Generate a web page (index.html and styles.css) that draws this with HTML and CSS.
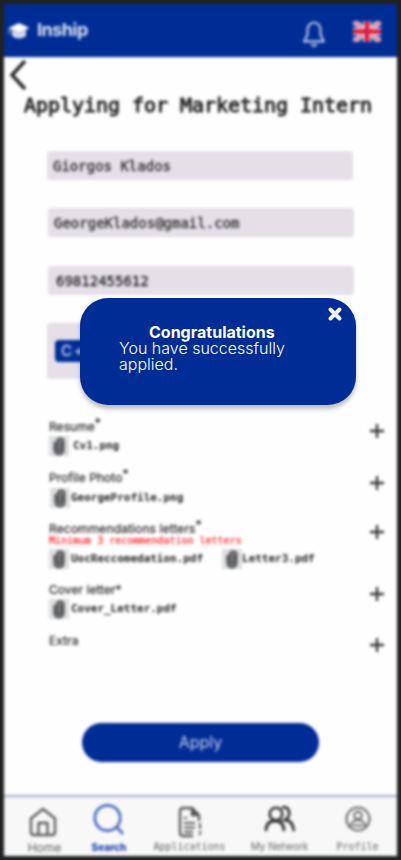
FILE: index.html
```html
<!DOCTYPE html>
<html lang="en">
<head>
<meta charset="utf-8">
<title>Inship</title>
<link rel="stylesheet" href="styles.css">
</head>
<body>
<svg class="defs" width="0" height="0">
  <symbol id="clip" viewBox="0 0 20 20"><rect width="20" height="20" fill="#dedede"/><path d="M5.500 6v8a4.500 4.500 0 0 0 9 0V5a3.300 3.300 0 0 0-6.500 0V13a2 2 0 0 0 4 0V6" fill="#85878a" stroke="#56585b" stroke-width="2.200"/></symbol>
  <symbol id="plus" viewBox="0 0 16 16"><path d="M8 1v14M1 8h14" stroke="#333" stroke-width="2.300"/></symbol>
</svg>
<div class="phone">
  <header class="top">
    <svg class="cap" width="22" height="18" viewBox="0 0 22 18"><path d="M11 1 0.500 6 11 11 21.500 6z" fill="#fff"/><path d="M4 8v6q7 5 14 0V8l-7 3.300z" fill="#d5dcf0"/><path d="M1.500 6v6" stroke="#d5dcf0"/></svg>
    <span class="brand">Inship</span>
    <svg class="bell" width="26" height="28" viewBox="0 0 26 28"><path d="M2 21.300h22M4.500 21V18l2-3V10a6.500 7.500 0 0 1 13 0v5l2 3v3M10.500 24q2.500 4 5 0" fill="none" stroke="#b9c7ea" stroke-width="2.200"/></svg>
    <svg class="flag" width="28" height="21" viewBox="0 0 28 21"><rect width="28" height="21" fill="#284a9e"/><path d="M0 0 28 21M28 0 0 21" stroke="#fff" stroke-width="4.600"/><path d="M0 0 28 21M28 0 0 21" stroke="#dc3550" stroke-width="1.500"/><path d="M14 0v21M0 10.500h28" stroke="#f5dfe7" stroke-width="7"/><path d="M14 0v21M0 10.500h28" stroke="#d9183c" stroke-width="4.600"/></svg>
  </header>
  <main class="content">
    <svg class="back" width="18" height="32" viewBox="0 0 18 32"><path d="M16 2 3 16 16 30" fill="none" stroke="#222" stroke-width="3.400"/></svg>
    <h1 class="title">Applying for Marketing Intern</h1>
    <div class="fields">
      <div class="field">Giorgos Klados</div>
      <div class="field second">GeorgeKlados@gmail.com</div>
      <div class="field third">69812455612</div>
      <div class="field skills"><span class="tag">C++</span></div>
    </div>
    <div class="docs">
      <section class="doc"><div class="info"><p class="label">Resume<sup>*</sup></p><div class="files"><span class="file resume"><svg><use href="#clip"/></svg>Cv1.png</span></div></div><svg class="plus"><use href="#plus"/></svg></section>
      <section class="doc photo"><div class="info"><p class="label">Profile Photo<sup>*</sup></p><div class="files"><span class="file"><svg><use href="#clip"/></svg>GeorgeProfile.png</span></div></div><svg class="plus"><use href="#plus"/></svg></section>
      <section class="doc letters"><div class="info"><p class="label">Recommendations letters<sup>*</sup></p><p class="warn">Minimum 3 recommendation letters</p><div class="files"><span class="file"><svg><use href="#clip"/></svg>UocReccomedation.pdf</span><span class="file letter"><svg><use href="#clip"/></svg>Letter3.pdf</span></div></div><svg class="plus"><use href="#plus"/></svg></section>
      <section class="doc"><div class="info"><p class="label">Cover letter*</p><div class="files"><span class="file cover"><svg><use href="#clip"/></svg>Cover_Letter.pdf</span></div></div><svg class="plus"><use href="#plus"/></svg></section>
      <section class="doc"><div class="info"><p class="label">Extra</p></div><svg class="plus"><use href="#plus"/></svg></section>
    </div>
    <button class="apply">Apply</button>
  </main>
  <nav class="nav">
    <a class="item home"><svg width="30" height="32" viewBox="0 0 30 32"><path d="M3 12.500 15 3l12 9.500V26q0 3-3 3H6q-3 0-3-3zM10.500 29V17h9v12" fill="none" stroke="#5b5b5b" stroke-width="2.400" stroke-linejoin="round"/></svg><span>Home</span></a>
    <a class="item search"><svg width="32" height="32" viewBox="0 0 32 32"><circle cx="14.500" cy="14" r="12.700" fill="none" stroke="#4a6bbd" stroke-width="2.700"/><path d="m23.500 23 6.500 7" stroke="#4a6bbd" stroke-width="2.700"/></svg><span>Search</span></a>
    <a class="item apps"><svg width="26" height="32" viewBox="0 0 26 32"><path d="M15 30H5q-3 0-3-3V5q0-3 3-3h9l7 7v6M14 2v7h7" fill="none" stroke="#555" stroke-width="2.300"/><path d="M14 2v7h7z" fill="#555"/><path d="M6 12h3M6 17h11M6 21.500h11M6 26h9M22 17v6M22 25v4" stroke="#555" stroke-width="1.900"/></svg><span>Applications</span></a>
    <a class="item network"><svg width="32" height="28" viewBox="0 0 32 28"><path d="M2 26c0-7 3-10 9-10s9 3 9 10M18 3c6-4 11 7 3 12 5 0 8 4 9 11" fill="none" stroke="#333" stroke-width="2.800"/><circle cx="12" cy="9" r="6.300" fill="none" stroke="#333" stroke-width="2.600"/></svg><span>My Network</span></a>
    <a class="item profile"><svg width="26" height="26" viewBox="0 0 26 26"><g fill="none" stroke="#666" stroke-width="2"><circle cx="13" cy="13" r="11.500"/><circle cx="13" cy="9.500" r="3.800"/><path d="M5.500 21.500c0-10 15-10 15 0M8 19.500h10"/></g></svg><span>Profile</span></a>
  </nav>
</div>
<div class="dialog" role="dialog">
  <svg class="close" width="14" height="14" viewBox="0 0 14 14"><path d="m2.500 2.500 9 9m0-9-9 9" stroke="#f4f4f4" stroke-width="3.900" stroke-linecap="round"/></svg>
  <h2>Congratulations</h2>
  <p>You have successfully<br>applied.</p>
</div>
</body>
</html>
```
FILE: styles.css
```css
* { box-sizing: border-box; margin: 0; }
html { background: #202122; }
body { width: 401px; height: 860px; overflow: hidden; font-family: Inter, sans-serif; color: #222; }
svg { display: block; flex: none; }
.defs { position: absolute; }
.phone { width: 393px; height: 852px; margin: 4px; display: flex; flex-direction: column; background: #fefefe; filter: blur(1.35px); }
.top { height: 53px; flex: none; display: flex; align-items: center; background: #002c96; padding: 0 16px 0 5px; }
.cap { margin-left: -1px; }
.brand { margin-left: 7px; color: #dde4f6; font-size: 18px; font-weight: 700; letter-spacing: -.5px; position: relative; top: -1px; }
.bell { margin: 7px 26px 0 auto; }
.flag { margin-top: 1px; }
.content { flex: 1; min-height: 0; display: flex; flex-direction: column; }
.back { margin: 2px 0 0 5px; }
.title { margin: 2px 0 0 20px; height: 24px; font: 400 20px/24px "DejaVu Sans Mono", monospace; letter-spacing: -.04px; white-space: nowrap; -webkit-text-stroke: .9px #222; color: #222; }
.fields { margin: 34px 0 0 43px; width: 307px; display: grid; grid-template-rows: 29px 29px 29px 56px; row-gap: 28.400px; }
.field { width: 306px; padding-left: 6px; background: #e5e0e8; border-radius: 3px; font: 14px/30px "DejaVu Sans Mono", monospace; color: #2d2c2f; -webkit-text-stroke: .4px; }
.second, .third { margin-left: 1px; }
.third { padding-left: 8px; }
.skills { padding: 17px 0 0 8px; }
.tag { display: block; width: 60px; height: 22px; padding-left: 6px; border-radius: 4px; background: #002c96; color: #c2cdec; font: 15px/22px Inter, sans-serif; letter-spacing: 2px; }
.docs { margin: 40px 12px 0 45px; }
.doc { display: flex; justify-content: space-between; height: 51px; }
.letters { height: 61px; }
.label { height: 16px; font-size: 12px; line-height: 16px; letter-spacing: .05px; white-space: nowrap; -webkit-text-stroke: .2px; }
.label sup { font-size: 12px; line-height: 0; vertical-align: 4px; }
.letters .label { letter-spacing: .12px; }
.warn { height: 9px; font: 10px/8px "DejaVu Sans Mono", monospace; color: #ff2028; -webkit-text-stroke: .2px; white-space: nowrap; }
.files { display: flex; gap: 19px; height: 22px; }
.letters .files { margin-top: 2px; }
.file { display: flex; align-items: center; gap: 2px; height: 22px; font: 700 11px/22px "DejaVu Sans Mono", monospace; color: #222; letter-spacing: -.02px; }
.photo .file { margin-top: 1px; padding-left: 1px; gap: 1px; }
.file svg { width: 20px; height: 20px; }
.resume { gap: 4px; }
.letter { gap: 0; }
.plus { width: 16px; height: 16px; margin-top: 4px; }
.photo .plus { margin-top: 5px; }
.letters .plus { margin-top: 3px; }
.apply { width: 237px; height: 39px; flex: none; margin: 39px 0 0 78px; border: 0; border-radius: 20px; background: #002c96; color: #c5cfeb; font: 16px/39px Inter, sans-serif; padding: 0; }
.nav { height: 61px; flex: none; border-top: 2px solid #9eadd2; background: #f8f8f8; display: grid; grid-template-columns: 76px 58px 103px 77px 79px; }
.item { display: flex; flex-direction: column; align-items: center; font-size: 11px; line-height: 14px; color: #606060; white-space: nowrap; }
.item span { margin-top: auto; margin-bottom: 2px; }
.item svg { margin-top: 9px; }
.home { font-size: 12px; padding-left: 5px; }
.home svg { margin-right: 3px; }
.home span { margin-bottom: 1px; }
.search { color: #1740a5; font-weight: 800; font-size: 10px; }
.search svg { margin-top: 7px; }
.apps svg { margin-left: 2px; }
.apps, .profile { font: 10px/14px "DejaVu Sans Mono", monospace; }
.network { font-size: 10px; }
.network span { margin-bottom: 3px; }
.network svg { margin-top: 8px; }
.dialog { position: absolute; left: 80px; top: 298px; width: 276px; height: 107px; padding: 26px 0 0 39px; border-radius: 28px; background: #002c96; color: #fff; box-shadow: 0 4px 4px rgba(0,0,0,.25); font: 300 16px/16px Inter, sans-serif; }
.dialog h2 { margin-left: 30px; font: 700 16px/16px Inter, sans-serif; }
.close { position: absolute; right: 14px; top: 9px; }
```
